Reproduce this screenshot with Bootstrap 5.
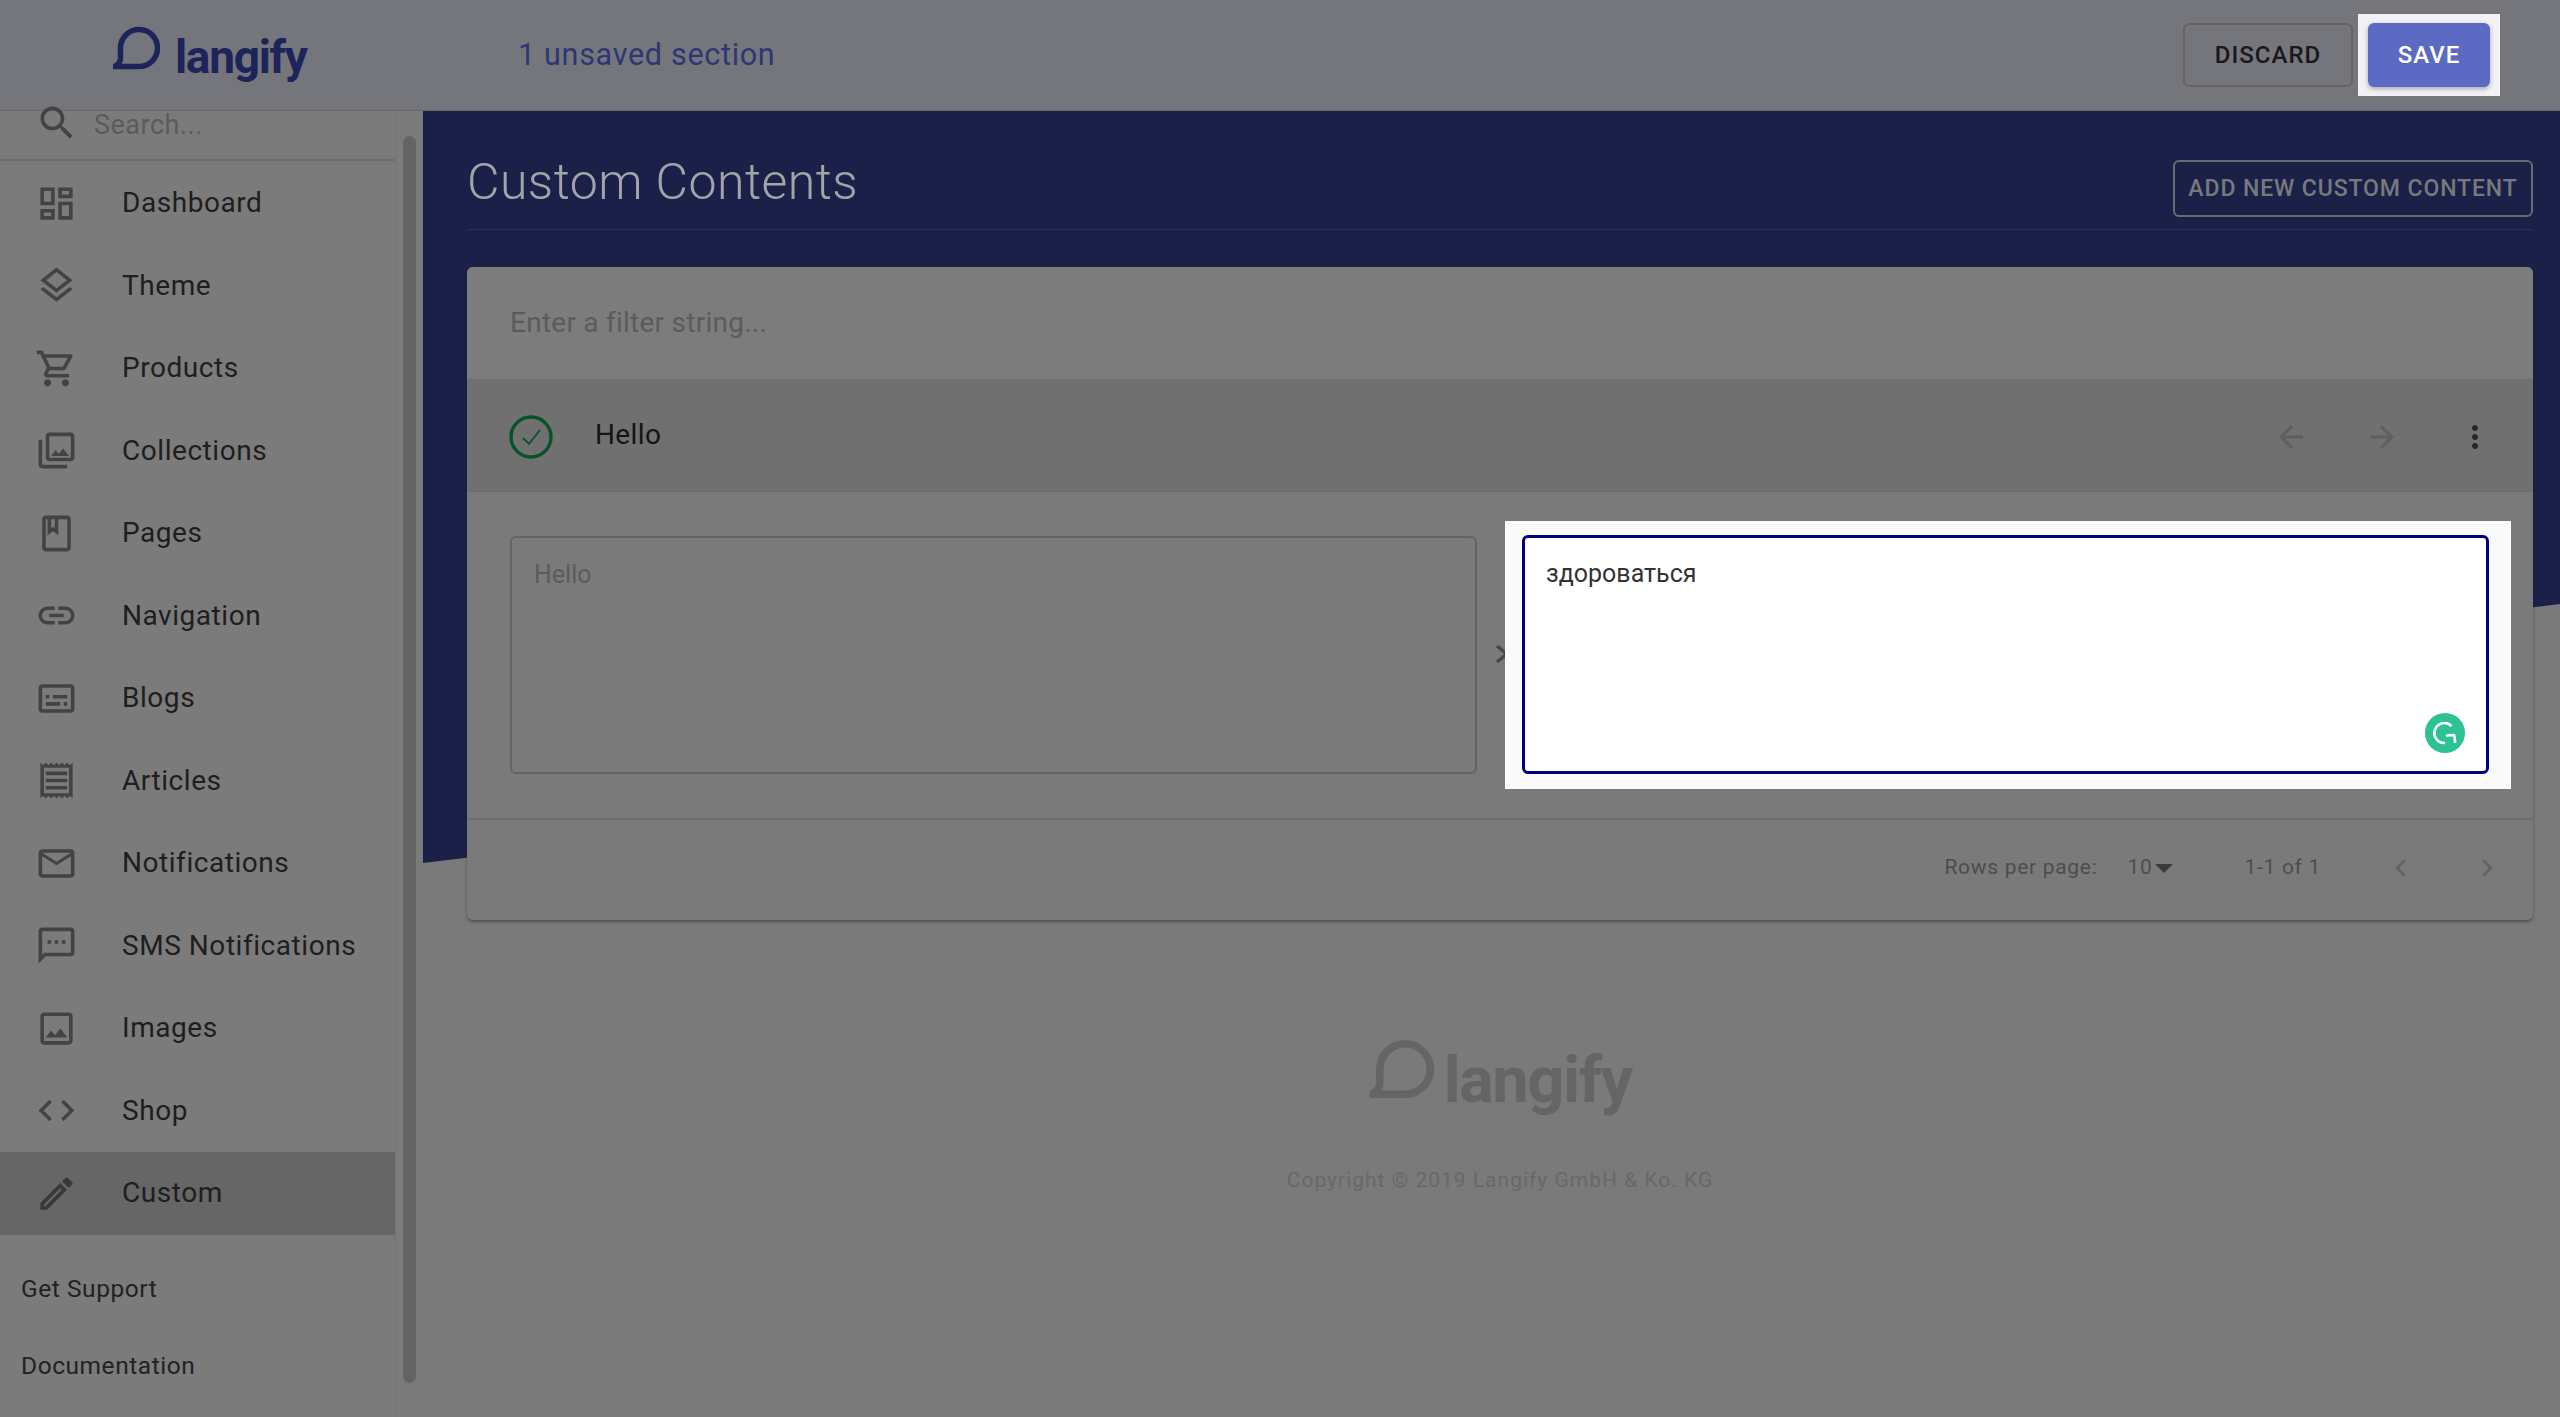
<!DOCTYPE html>
<html lang="en">
<head>
  <meta charset="UTF-8" />
  <meta name="viewport" content="width=device-width, initial-scale=1" />
  <title>Custom Contents</title>
  <link href="https://cdn.jsdelivr.net/npm/bootstrap@5.3.0/dist/css/bootstrap.min.css" rel="stylesheet">
  <style>
    body {
      height: 1417px;
      overflow: hidden;
      background: #7a7a7a;
      font-family: Roboto, "Noto Sans", sans-serif;
      color: #1e1e1e;
    }
    svg { fill: currentColor; flex: none; }

    /* top bar */
    .topbar {
      height: 111px;
      flex: none;
      background: #75767b;
      border-bottom: 1px solid #66676b;
      padding-right: 60px;
    }
    .logo-box { width: 518px; padding-left: 112px; margin-top: -4px; color: #1c2459; }
    .logo-word {
      font-weight: 700;
      font-size: 46px;
      line-height: 46px;
      letter-spacing: -1.3px;
      margin-left: 15px;
      margin-top: 8px;
    }
    .unsaved { font-size: 30.5px; letter-spacing: .7px; color: #2d3774; }
    .btn-discard, .btn-save {
      height: 64px;
      border-radius: 6px;
      font-size: 24px;
      font-weight: 500;
      letter-spacing: 1px;
      padding: 0;
    }
    .btn-discard { width: 170px; color: #191919; border: 2px solid #646466; background: transparent; }
    .save-hole { background: #f1f1f6; padding: 9px 10px; margin-left: 5px; }
    .btn-save { display: block; width: 122px; color: #fff; background: #5c6ac4; border: 0; box-shadow: 0 2px 5px rgba(0,0,0,.3); }

    /* sidebar */
    .side-wrap { width: 423px; flex: none; background: #7b7b7b; }
    .side-col { width: 396px; border-right: 1px solid #747474; }
    .side-search { height: 50px; padding: 0 0 20px 0; border-bottom: 2px solid #6e6e6e; margin-bottom: 1px; color: #434343; }
    .side-search svg { margin: -4px 15px 0 35px; }
    .side-search input {
      background: transparent; border: 0; padding: 0; font-size: 27px; letter-spacing: .5px; height: 30px; box-shadow: none;
    }
    .side-search input::placeholder, .filter-row input::placeholder { color: #5b5b5b; opacity: 1; }
    .side-link {
      height: 82.5px;
      padding: 0 0 0 35px;
      color: #1e1e1e;
      font-size: 28px;
      letter-spacing: .55px;
    }
    .side-link svg { color: #434343; margin-right: 44px; }
    .side-link.on { background: #666; }
    .side-link.on svg { color: #383838; }
    .side-extra { font-size: 24.5px; letter-spacing: .55px; color: #222; padding-left: 21px; height: 77px; }
    .side-gutter { width: 27px; padding: 25px 7px 34px 7px; }
    .side-thumb { width: 13px; height: 100%; background: #646464; border-radius: 7px; }

    /* main */
    .main-area { padding: 0 27px 0 44px; min-width: 0; }
    .navy-back {
      position: absolute; top: 0; left: 0; right: 0; height: 752px;
      background: #1b2049;
      clip-path: polygon(0 0, 100% 0, 100% 493px, 0 100%);
    }
    .head-row { height: 119px; padding: 40px 0 12px; border-bottom: 1px solid #2c3058; position: relative; }
    .head-title { font-size: 50px; line-height: 60px; font-weight: 300; color: #a3a4aa; margin: 1px 0 0; letter-spacing: .45px; }
    .btn-add {
      width: 360px; height: 57px; padding: 1px 0 0;
      border: 2px solid #6a6b70; border-radius: 6px; background: transparent;
      color: #78797b; font-size: 23px; font-weight: 500; letter-spacing: .9px;
    }
    .panel {
      margin-top: 37px; height: 653px; border: 0; border-radius: 6px;
      background: #7a7a7a; box-shadow: 0 2px 3px rgba(0,0,0,.35); position: relative;
    }
    .filter-row { height: 113px; padding: 0 43px; background: #7c7c7c; border-bottom: 1px solid #6f6f6f; border-radius: 6px 6px 0 0; }
    .filter-row input { background: transparent; border: 0; padding: 0; font-size: 28px; letter-spacing: .25px; box-shadow: none; }
    .hello-row { height: 112px; padding: 2px 43px 0 42px; background: #707070; border-bottom: 1px solid #6a6a6a; }
    .hello-row .hello-name { font-size: 28px; margin-left: 42px; letter-spacing: .4px; color: #141414; margin-top: -3px; }
    .hello-row .tools { color: #5f5f5f; margin-right: -3px; }
    .edit-row { height: 328px; padding: 44px 44px 44px 43px; border-bottom: 2px solid #6e6e6e; }
    .src-text, .dst-text {
      height: 100%; resize: none; border-radius: 6px; font-size: 25px; padding: 22px 22px; line-height: 30px; box-shadow: none;
    }
    .src-text { width: 967px; flex: none; background: transparent; border: 2px solid #646464; color: #5c5c5c; }
    .src-text:focus { background: transparent; border-color: #646464; color: #5c5c5c; box-shadow: none; }
    .arrow-gap { width: 45px; flex: none; padding: 0 0 3px 10px; color: #474747; }
    .dst-hole { flex: 1; min-width: 0; background: #fafafa; margin: -15px -22px -15px -17px; padding: 14px 22px 15px 17px; position: relative; }
    .dst-text { width: 100%; background: #fff; border: 3px solid #00007d; color: #333; padding: 21px 21px; }
    .g-badge {
      position: absolute; right: 46px; bottom: 36px; width: 40px; height: 40px;
      background: #2ec193; border-radius: 50%; color: #fff;
    }
    .pager { height: 100px; padding-right: 28px; color: #4d4d4d; font-size: 21px; letter-spacing: .7px; padding-bottom: 4px; }
    .pager .pg-caret { width: 0; height: 0; border-left: 9px solid transparent; border-right: 9px solid transparent; border-top: 9px solid #3c3c3c; margin-left: 3px; }
    .pager .pg-arrow { color: #646464; }

    .page-foot { color: #656565; padding-top: 119px; }
    .page-foot .logo-word { font-size: 65px; line-height: 65px; letter-spacing: -1.5px; margin-left: 9px; margin-top: 9px; }
    .copy-line { font-size: 21px; letter-spacing: 1px; color: #686868; margin-top: 52px; }
  </style>
</head>
<body class="d-flex flex-column">

<header class="topbar d-flex align-items-center">
  <div class="logo-box d-flex align-items-start">
    <svg width="48" height="44" viewBox="0 0 48 44"><path d="M1 40.5H27A18.5 18.5 0 1 0 8.5 21V32Q8.5 37 3 40.5" fill="none" stroke="currentColor" stroke-width="5.5"/></svg>
    <div class="logo-word">langify</div>
  </div>
  <div class="unsaved">1 unsaved section</div>
  <div class="ms-auto d-flex align-items-center">
    <button class="btn btn-discard">DISCARD</button>
    <div class="save-hole"><button class="btn btn-save">SAVE</button></div>
  </div>
</header>

<div class="d-flex flex-grow-1" style="min-height:0">
  <aside class="side-wrap d-flex">
    <div class="side-col">
      <div class="side-search d-flex align-items-center">
        <svg width="44" height="44" viewBox="0 0 24 24"><path d="M15.5 14h-.79l-.28-.27C15.41 12.59 16 11.11 16 9.5 16 5.91 13.09 3 9.5 3S3 5.91 3 9.5 5.91 16 9.5 16c1.61 0 3.09-.59 4.23-1.57l.27.28v.79l5 4.99L20.49 19l-4.99-5zm-6 0C7.01 14 5 11.99 5 9.5S7.01 5 9.5 5 14 7.01 14 9.5 11.99 14 9.5 14z"/></svg>
        <input class="form-control" placeholder="Search...">
      </div>
      <nav class="nav flex-column">
        <a class="nav-link side-link d-flex align-items-center" href="#"><svg width="43" height="43" viewBox="0 0 24 24"><path d="M19 5v2h-4V5h4M9 5v6H5V5h4m10 8v6h-4v-6h4M9 17v2H5v-2h4M21 3h-8v6h8V3zM11 3H3v10h8V3zm10 8h-8v10h8V11zm-10 4H3v6h8v-6z"/></svg>Dashboard</a>
        <a class="nav-link side-link d-flex align-items-center" href="#"><svg width="43" height="43" viewBox="0 0 24 24"><path d="M11.99 18.54l-7.37-5.73L3 14.07l9 7 9-7-1.63-1.27zM12 16l7.36-5.73L21 9l-9-7-9 7 1.63 1.27L12 16zm0-11.47L17.74 9 12 13.47 6.26 9 12 4.53z"/></svg>Theme</a>
        <a class="nav-link side-link d-flex align-items-center" href="#"><svg width="43" height="43" viewBox="0 0 24 24"><path d="M15.55 13c.75 0 1.41-.41 1.75-1.03l3.58-6.49c.37-.66-.11-1.48-.87-1.48H5.21l-.94-2H1v2h2l3.6 7.59-1.35 2.44C4.52 15.37 5.48 17 7 17h12v-2H7l1.1-2h7.45zM6.16 6h12.15l-2.76 5H8.53L6.16 6zM7 18c-1.1 0-1.99.9-1.99 2S5.9 22 7 22s2-.9 2-2-.9-2-2-2zm10 0c-1.1 0-1.99.9-1.99 2s.89 2 1.99 2 2-.9 2-2-.9-2-2-2z"/></svg>Products</a>
        <a class="nav-link side-link d-flex align-items-center" href="#"><svg width="43" height="43" viewBox="0 0 24 24"><path d="M20 4v12H8V4h12m0-2H8c-1.1 0-2 .9-2 2v12c0 1.1.9 2 2 2h12c1.1 0 2-.9 2-2V4c0-1.1-.9-2-2-2zm-8.5 9.67l1.69 2.26 2.48-3.1L19 15H9zM2 6v14c0 1.1.9 2 2 2h14v-2H4V6H2z"/></svg>Collections</a>
        <a class="nav-link side-link d-flex align-items-center" href="#"><svg width="43" height="43" viewBox="0 0 24 24"><path d="M18 2H6c-1.1 0-2 .9-2 2v16c0 1.1.9 2 2 2h12c1.1 0 2-.9 2-2V4c0-1.1-.9-2-2-2zM9 4h2v5l-1-.75L9 9V4zm9 16H6V4h1v9l3-2.25L13 13V4h5v16z"/></svg>Pages</a>
        <a class="nav-link side-link d-flex align-items-center" href="#"><svg width="43" height="43" viewBox="0 0 24 24"><path d="M3.9 12c0-1.71 1.39-3.1 3.1-3.1h4V7H7c-2.76 0-5 2.24-5 5s2.24 5 5 5h4v-1.9H7c-1.71 0-3.1-1.39-3.1-3.1zM8 13h8v-2H8v2zm9-6h-4v1.9h4c1.71 0 3.1 1.39 3.1 3.1s-1.39 3.1-3.1 3.1h-4V17h4c2.76 0 5-2.24 5-5s-2.24-5-5-5z"/></svg>Navigation</a>
        <a class="nav-link side-link d-flex align-items-center" href="#"><svg width="43" height="43" viewBox="0 0 24 24"><path d="M20 4H4c-1.1 0-2 .9-2 2v12c0 1.1.9 2 2 2h16c1.1 0 2-.9 2-2V6c0-1.1-.9-2-2-2zm0 14H4V6h16v12zM6 10h2v2H6zm0 4h8v2H6zm10 0h2v2h-2zm-6-4h8v2h-8z"/></svg>Blogs</a>
        <a class="nav-link side-link d-flex align-items-center" href="#"><svg width="43" height="43" viewBox="0 0 24 24"><path d="M19.5 3.5L18 2l-1.5 1.5L15 2l-1.5 1.5L12 2l-1.5 1.5L9 2 7.5 3.5 6 2 4.5 3.5 3 2v20l1.5-1.5L6 22l1.5-1.5L9 22l1.5-1.5L12 22l1.5-1.5L15 22l1.5-1.5L18 22l1.5-1.5L21 22V2l-1.5 1.5zM19 19.09H5V4.91h14v14.18zM6 15h12v2H6zm0-4h12v2H6zm0-4h12v2H6z"/></svg>Articles</a>
        <a class="nav-link side-link d-flex align-items-center" href="#"><svg width="43" height="43" viewBox="0 0 24 24"><path d="M22 6c0-1.1-.9-2-2-2H4c-1.1 0-2 .9-2 2v12c0 1.1.9 2 2 2h16c1.1 0 2-.9 2-2V6zm-2 0l-8 5-8-5h16zm0 12H4V8l8 5 8-5v10z"/></svg>Notifications</a>
        <a class="nav-link side-link d-flex align-items-center" href="#"><svg width="43" height="43" viewBox="0 0 24 24"><path d="M20 2H4c-1.1 0-2 .9-2 2v18l4-4h14c1.1 0 2-.9 2-2V4c0-1.1-.9-2-2-2zm0 14H5.17L4 17.17V4h16v12zM7 9h2v2H7zm4 0h2v2h-2zm4 0h2v2h-2z"/></svg>SMS Notifications</a>
        <a class="nav-link side-link d-flex align-items-center" href="#"><svg width="43" height="43" viewBox="0 0 24 24"><path d="M19 5v14H5V5h14m0-2H5c-1.1 0-2 .9-2 2v14c0 1.1.9 2 2 2h14c1.1 0 2-.9 2-2V5c0-1.1-.9-2-2-2zm-4.86 8.86l-3 3.87L9 13.14 6 17h12l-3.86-5.14z"/></svg>Images</a>
        <a class="nav-link side-link d-flex align-items-center" href="#"><svg width="43" height="43" viewBox="0 0 24 24"><path d="M9.4 16.6L4.8 12l4.6-4.6L8 6l-6 6 6 6 1.4-1.4zm5.2 0l4.6-4.6-4.6-4.6L16 6l6 6-6 6-1.4-1.4z"/></svg>Shop</a>
        <a class="nav-link side-link on d-flex align-items-center" href="#"><svg width="43" height="43" viewBox="0 0 24 24"><path d="M14.06 9.02l.92.92L5.92 19H5v-.92l9.06-9.06M17.66 3c-.25 0-.51.1-.7.29l-1.83 1.83 3.75 3.75 1.83-1.83c.39-.39.39-1.02 0-1.41l-2.34-2.34c-.2-.2-.45-.29-.71-.29zm-3.6 3.19L3 17.25V21h3.75L17.81 9.94l-3.75-3.75z"/></svg>Custom</a>
        <div class="mt-3"></div>
        <a class="nav-link side-extra d-flex align-items-center" href="#">Get Support</a>
        <a class="nav-link side-extra d-flex align-items-center" href="#">Documentation</a>
      </nav>
    </div>
    <div class="side-gutter"><div class="side-thumb"></div></div>
  </aside>

  <main class="main-area flex-grow-1 position-relative">
    <div class="navy-back"></div>

    <div class="head-row d-flex justify-content-between">
      <h1 class="head-title align-self-start">Custom Contents</h1>
      <button class="btn btn-add align-self-end">ADD NEW CUSTOM CONTENT</button>
    </div>

    <section class="card panel">
      <div class="filter-row d-flex align-items-center">
        <input class="form-control" placeholder="Enter a filter string...">
      </div>
      <div class="hello-row d-flex align-items-center">
        <svg width="44" height="44" viewBox="0 0 44 44" fill="none" stroke="#085229"><circle cx="22" cy="22" r="20" stroke-width="3.4" fill="none"/><path d="M14 23l6 6 11-14" stroke-width="1.8" fill="none"/></svg>
        <span class="hello-name">Hello</span>
        <div class="tools ms-auto d-flex align-items-center">
          <svg width="36" height="36" viewBox="0 0 24 24"><path d="M20 11H7.83l5.59-5.59L12 4l-8 8 8 8 1.41-1.41L7.83 13H20v-2z"/></svg>
          <svg style="margin-left:55px" width="36" height="36" viewBox="0 0 24 24"><path d="M12 4l-1.41 1.41L16.17 11H4v2h12.17l-5.58 5.59L12 20l8-8z"/></svg>
          <svg style="margin-left:57px;color:#262626" width="36" height="36" viewBox="0 0 24 24"><path d="M12 8c1.1 0 2-.9 2-2s-.9-2-2-2-2 .9-2 2 .9 2 2 2zm0 2c-1.1 0-2 .9-2 2s.9 2 2 2 2-.9 2-2-.9-2-2-2zm0 6c-1.1 0-2 .9-2 2s.9 2 2 2 2-.9 2-2-.9-2-2-2z"/></svg>
        </div>
      </div>
      <div class="edit-row d-flex align-items-stretch">
        <textarea class="form-control src-text" readonly>Hello</textarea>
        <div class="arrow-gap d-flex align-items-center">
          <svg width="30" height="36" viewBox="4 0 16 24" preserveAspectRatio="none"><path d="M10 6L8.59 7.41 13.17 12l-4.58 4.59L10 18l6-6z"/></svg>
        </div>
        <div class="dst-hole">
          <textarea class="form-control dst-text">здороваться</textarea>
          <div class="g-badge d-flex align-items-center justify-content-center">
            <svg width="28" height="28" viewBox="0 0 28 28" fill="none" stroke="#fff" stroke-width="2.6"><path d="M20.5 7A10 10 0 1 0 14 24" fill="none"/><path d="M24 24c0-3-.5-7-1-8-2 0-6 0-8 1" fill="none" stroke-linejoin="round"/></svg>
          </div>
        </div>
      </div>
      <div class="pager d-flex align-items-center justify-content-end">
        <span>Rows per page:</span>
        <span class="d-inline-flex align-items-center" style="margin-left:30px">10<span class="pg-caret"></span></span>
        <span style="margin-left:71px">1-1 of 1</span>
        <svg class="pg-arrow" style="margin-left:62px" width="36" height="36" viewBox="0 0 24 24"><path d="M15.41 7.41L14 6l-6 6 6 6 1.41-1.41L10.83 12z"/></svg>
        <svg class="pg-arrow" style="margin-left:50px" width="36" height="36" viewBox="0 0 24 24"><path d="M10 6L8.59 7.41 13.17 12l-4.58 4.59L10 18l6-6z"/></svg>
      </div>
    </section>

    <footer class="page-foot position-relative text-center">
      <div class="d-flex justify-content-center align-items-start">
        <svg width="66" height="60" viewBox="0 0 48 44"><path d="M1 40.5H27A18.5 18.5 0 1 0 8.5 21V32Q8.5 37 3 40.5" fill="none" stroke="currentColor" stroke-width="5.5"/></svg>
        <div class="logo-word">langify</div>
      </div>
      <div class="copy-line">Copyright © 2019 Langify GmbH &amp; Ko. KG</div>
    </footer>
  </main>
</div>

<script src="https://cdn.jsdelivr.net/npm/bootstrap@5.3.0/dist/js/bootstrap.bundle.min.js"></script>
</body>
</html>
